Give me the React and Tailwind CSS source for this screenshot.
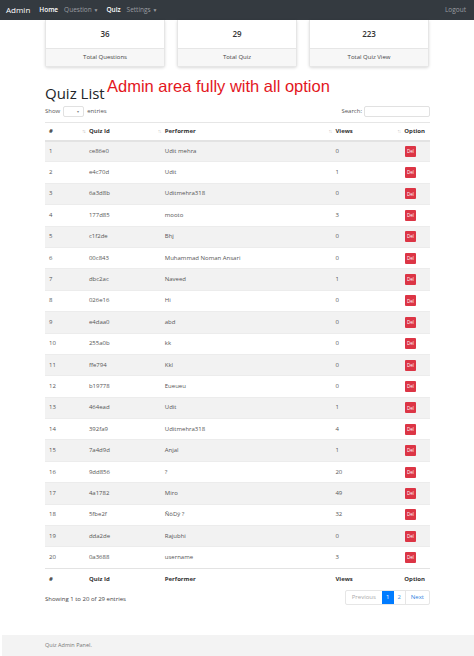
import React from 'react'

const rows = [
  ['1', 'ce86e0', 'Udit mehra', '0'],
  ['2', 'e4c70d', 'Udit', '1'],
  ['3', '6a3d8b', 'Uditmehra318', '0'],
  ['4', '177d85', 'mooto', '3'],
  ['5', 'c1f2de', 'Bhj', '0'],
  ['6', '00c843', 'Muhammad Noman Ansari', '0'],
  ['7', 'dbc2ac', 'Naveed', '1'],
  ['8', '026e16', 'Hi', '0'],
  ['9', 'e4daa0', 'abd', '0'],
  ['10', '255a0b', 'kk', '0'],
  ['11', 'ffe794', 'Kkl', '0'],
  ['12', 'b19778', 'Eueueu', '0'],
  ['13', '464ead', 'Udit', '1'],
  ['14', '392fa9', 'Uditmehra318', '4'],
  ['15', '7a4d9d', 'Anjal', '1'],
  ['16', '9dd856', '?', '20'],
  ['17', '4a1782', 'Miro', '49'],
  ['18', '5fbe2f', 'ÑöDÿ ?', '32'],
  ['19', 'dda2de', 'Rajubhi', '0'],
  ['20', '0a3688', 'username', '3'],
]

function SortIcon({ active }) {
  return (
    <span className="absolute right-[4px] top-1/2 -translate-y-1/2 text-[5px] leading-none tracking-[-1px] text-[#c8c8c8]">
      <span>↑</span>
      <span className={active ? 'text-[#999]' : ''}>↓</span>
    </span>
  )
}

function Card({ value, label }) {
  return (
    <div className="w-[120px] bg-white rounded-b-[3px] shadow-[0_1px_3px_rgba(0,0,0,0.15)] border border-t-0 border-[#e6e6e6]">
      <div className="h-[28px] flex items-center justify-center text-[8px] font-semibold text-[#333]">{value}</div>
      <div className="h-[18px] flex items-center justify-center bg-[#f7f7f7] border-t border-[#e6e6e6] text-[6px] text-[#444]">{label}</div>
    </div>
  )
}

export default function App() {
  return (
    <div className="relative w-[474px] min-h-[656px] bg-white text-[#333] flex flex-col" style={{ fontFamily: '"Open Sans", "Noto Sans", sans-serif' }}>
      <nav className="h-[20px] bg-[#343a40] flex items-center px-[6px] text-[6.5px]">
        <span className="text-white text-[8px] mr-[9px]">Admin</span>
        <span className="text-white font-semibold mr-[6px]">Home</span>
        <span className="text-[#9a9da0] mr-[8px]">Question <span className="text-[5px]">▼</span></span>
        <span className="text-white font-semibold mr-[6px]">Quiz</span>
        <span className="text-[#9a9da0]">Settings <span className="text-[5px]">▼</span></span>
        <span className="ml-auto text-[#9a9da0] mr-[2px]">Logout</span>
      </nav>

      <div className="w-[385px] ml-[45px] flex-1 flex flex-col">
        <div className="flex gap-[12px]">
          <Card value="36" label="Total Questions" />
          <Card value="29" label="Total Quiz" />
          <Card value="223" label="Total Quiz View" />
        </div>

        <h2 className="mt-[17px] text-[15px] leading-[18px] font-medium text-[#212529]">Quiz List</h2>

        <div className="mt-[3px] h-[13px] flex items-center text-[6px] text-[#555]">
          <span>Show</span>
          <span className="ml-[3px] mr-[3px] w-[21px] h-[11px] border border-[#e1e1e1] rounded-[2px] flex items-center justify-end pr-[4px] text-[4px] text-[#888]">▾</span>
          <span>entries</span>
          <span className="ml-auto mr-[2px]">Search:</span>
          <span className="w-[66px] h-[11px] border border-[#e1e1e1] rounded-[2px]" />
        </div>

        <table className="mt-[4px] w-full border-collapse text-[6px]">
          <thead>
            <tr className="h-[18px] border-t border-[#e6e6e6] border-b-2 border-b-[#e3e3e3] font-bold text-[#333]">
              <th className="relative text-left pl-[4px] w-[44px]">#<SortIcon active /></th>
              <th className="relative text-left w-[76px]">Quiz Id<SortIcon /></th>
              <th className="relative text-left w-[171px]">Performer<SortIcon /></th>
              <th className="relative text-left w-[69px]">Views<SortIcon /></th>
              <th className="text-right pr-[5px]">Option</th>
            </tr>
          </thead>
          <tbody>
            {rows.map((r, i) => (
              <tr key={r[0]} className={`h-[21.4px] border-t border-[#ececec] text-[#555] ${i % 2 === 0 ? 'bg-[#f2f2f2]' : 'bg-white'}`}>
                <td className="pl-[4px]">{r[0]}</td>
                <td>{r[1]}</td>
                <td>{r[2]}</td>
                <td>{r[3]}</td>
                <td className="text-right pr-[14px]">
                  <span className="inline-flex items-center justify-center w-[11px] h-[11px] rounded-[1px] bg-[#dc3545] text-white text-[4.5px]">Del</span>
                </td>
              </tr>
            ))}
          </tbody>
          <tfoot>
            <tr className="h-[21px] border-t border-[#e3e3e3] font-bold text-[#333]">
              <th className="text-left pl-[4px]">#</th>
              <th className="text-left">Quiz Id</th>
              <th className="text-left">Performer</th>
              <th className="text-left">Views</th>
              <th className="text-right pr-[5px]">Option</th>
            </tr>
          </tfoot>
        </table>

        <div className="mt-[1px] flex items-start text-[6px]">
          <span className="mt-[5px] text-[#444]">Showing 1 to 20 of 29 entries</span>
          <div className="ml-auto flex h-[15px] border border-[#e6e6e6] rounded-[2px]">
            <span className="px-[6px] flex items-center text-[#aaa]">Previous</span>
            <span className="w-[12px] flex items-center justify-center bg-[#007bff] text-white">1</span>
            <span className="w-[12px] flex items-center justify-center text-[#4a90e2] border-r border-[#e6e6e6]">2</span>
            <span className="px-[5px] flex items-center text-[#2e7fe0]">Next</span>
          </div>
        </div>
      </div>

      <footer className="mt-[28px] ml-[2px] h-[21px] bg-[#f3f3f3] flex items-center pl-[43px] text-[5.5px] text-[#777]">
        Quiz Admin Panel.
      </footer>

      <div className="absolute left-[107px] top-[76px] text-[16.5px] leading-[20px] text-[#e3161d]" style={{ fontFamily: '"Liberation Sans", Arial, sans-serif' }}>
        Admin area fully with all option
      </div>
    </div>
  )
}
